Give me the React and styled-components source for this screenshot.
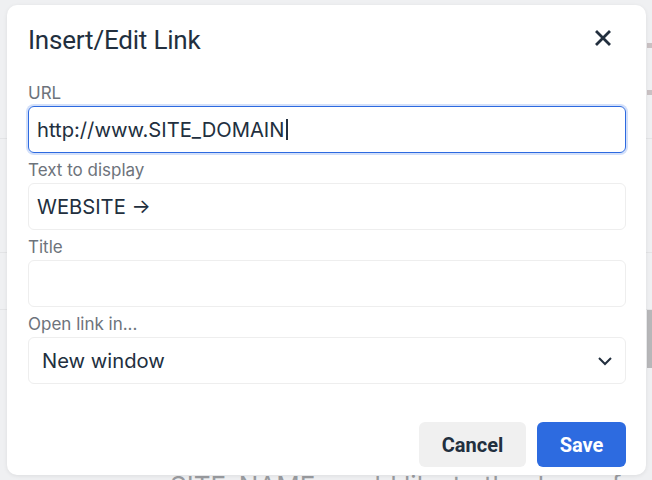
import React from 'react';
import styled, { createGlobalStyle } from 'styled-components';

const GlobalStyle = createGlobalStyle`
  html, body {
    margin: 0;
    padding: 0;
    background: #eff0f2;
    font-family: Inter, Roboto, "Liberation Sans", sans-serif;
  }
  * { box-sizing: border-box; }
`;

const Page = styled.div`
  position: relative;
  width: 652px;
  height: 480px;
  overflow: hidden;
  background: #eff0f2;
`;

/* the page behind the dialog, only its edges show */
const BackPage = styled.div`
  display: flex;
  flex-direction: column;
  height: 100%;
`;

const BackRow = styled.div`
  height: ${p => p.$h}px;
  flex: ${p => (p.$grow ? 1 : 'none')};
  border-bottom: ${p => (p.$grow ? 'none' : '1px solid #e3e4e6')};
  display: flex;
  justify-content: flex-end;
  align-items: ${p => (p.$end ? 'flex-end' : 'flex-start')};
  padding-top: ${p => p.$pt || 0}px;
`;

const BackBar = styled.div`
  width: 5px;
  height: ${p => p.$h}px;
  margin-top: ${p => p.$mt || 0}px;
  background: ${p => p.$c};
`;

const BackText = styled.div`
  align-self: flex-end;
  margin: 0 auto 0 170px;
  height: 6px;
  overflow: hidden;
  font-size: 26px;
  line-height: 26px;
  padding-top: 0;
  color: #9a9ca0;
  white-space: nowrap;
`;

const BackTextInner = styled.div`
  margin-top: -1px;
`;

const Overlay = styled.div`
  position: absolute;
  inset: 0;
  padding: 5px 6px 5px 7px;
`;

const Dialog = styled.div`
  height: 100%;
  background: #fff;
  border-radius: 10px;
  box-shadow: 0 1px 4px rgba(0, 0, 0, 0.08);
  display: flex;
  flex-direction: column;
  padding: 0 20px 0 21px;
`;

const Header = styled.div`
  display: flex;
  align-items: flex-start;
  justify-content: space-between;
  height: 77px;
  padding-top: 20px;
`;

const Title = styled.h1`
  margin: 0;
  font-family: Roboto, "Liberation Sans", sans-serif;
  font-size: 26px;
  line-height: 31px;
  font-weight: 400;
  color: #222f3e;
  letter-spacing: -0.2px;
`;

const CloseButton = styled.button`
  width: 24px;
  height: 24px;
  border: none;
  background: none;
  padding: 0;
  margin: 1px 11px 0 0;
  display: flex;
  align-items: center;
  justify-content: center;
  color: #222f3e;
`;

const Body = styled.div`
  display: flex;
  flex-direction: column;
`;

const Field = styled.div`
  display: flex;
  flex-direction: column;
  margin-bottom: 6px;
`;

const Label = styled.label`
  font-size: 17px;
  color: #6d737b;
  line-height: 22px;
  margin-bottom: 2px;
`;

const Input = styled.div`
  height: 47px;
  border-radius: 6px;
  border: 1px solid ${p => (p.$focused ? '#2d6ae0' : '#eeeeee')};
  box-shadow: ${p => (p.$focused ? '0 0 0 2px #d3e0fa' : 'none')};
  display: flex;
  align-items: center;
  padding: 0 ${p => (p.$select ? '12px 0 13px' : '8px')};
  font-size: 20.2px;
  color: #222f3e;
  justify-content: space-between;
`;

const Caret = styled.span`
  display: inline-block;
  width: 2px;
  height: 21px;
  background: #222f3e;
  vertical-align: -3px;
  margin-left: 1px;
`;

const Footer = styled.div`
  display: flex;
  justify-content: flex-end;
  gap: 11px;
  padding-top: 32px;
`;

const Button = styled.button`
  height: 45px;
  width: ${p => (p.$primary ? '89px' : '107px')};
  padding: 0;
  border: none;
  border-radius: 6px;
  font-family: Roboto, "Liberation Sans", sans-serif;
  font-weight: 700;
  font-size: 20px;
  background: ${p => (p.$primary ? '#2d6be0' : '#f0f0f0')};
  color: ${p => (p.$primary ? '#ffffff' : '#222f3e')};
`;

export default function App() {
  return (
    <>
      <GlobalStyle />
      <Page>
        <BackPage>
          <BackRow $h={139} $pt={43}>
            <div>
              <BackBar $h={5} $c="#c9c1c3" />
              <BackBar $h={5} $mt={42} $c="#c9c1c3" />
            </div>
          </BackRow>
          <BackRow $h={114} />
          <BackRow $h={57} />
          <BackRow $grow>
            <BackText><BackTextInner>SITE_NAME would like to thank you for</BackTextInner></BackText>
            <BackBar $h={58} $c="#b7b7b9" />
          </BackRow>
        </BackPage>
        <Overlay>
          <Dialog>
            <Header>
              <Title>Insert/Edit Link</Title>
              <CloseButton aria-label="Close">
                <svg width="16" height="16" viewBox="0 0 16 16">
                  <path d="M2 2 L14 14 M14 2 L2 14" stroke="currentColor" strokeWidth="2.8" strokeLinecap="square" />
                </svg>
              </CloseButton>
            </Header>
            <Body>
              <Field>
                <Label>URL</Label>
                <Input $focused>
                  <span>http://www.SITE_DOMAIN<Caret /></span>
                </Input>
              </Field>
              <Field>
                <Label>Text to display</Label>
                <Input>
                  <span>WEBSITE →</span>
                </Input>
              </Field>
              <Field>
                <Label>Title</Label>
                <Input />
              </Field>
              <Field>
                <Label>Open link in...</Label>
                <Input $select>
                  <span>New window</span>
                  <svg width="16" height="10" viewBox="0 0 16 10">
                    <path d="M2 2 L8 8 L14 2" fill="none" stroke="currentColor" strokeWidth="2" />
                  </svg>
                </Input>
              </Field>
            </Body>
            <Footer>
              <Button>Cancel</Button>
              <Button $primary>Save</Button>
            </Footer>
          </Dialog>
        </Overlay>
      </Page>
    </>
  );
}
